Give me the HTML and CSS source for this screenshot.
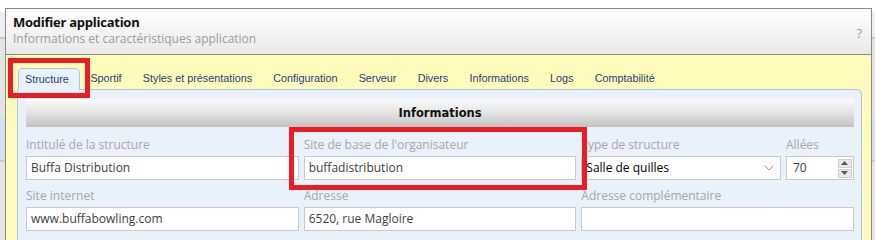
FILE: index.html
```html
<!DOCTYPE html>
<html lang="fr">
<head>
<meta charset="utf-8">
<title>Modifier application</title>
<link rel="stylesheet" href="styles.css">
</head>
<body>
<div class="page">
  <div class="dialog">
    <div class="dlg-head">
      <div class="dlg-titles">
        <div class="dlg-title">Modifier application</div>
        <div class="dlg-sub">Informations et caractéristiques application</div>
      </div>
      <div class="dlg-help">?</div>
    </div>
    <div class="dlg-body">
      <ul class="tabs">
        <li class="tab active">Structure</li>
        <li class="tab">Sportif</li>
        <li class="tab">Styles et présentations</li>
        <li class="tab">Configuration</li>
        <li class="tab">Serveur</li>
        <li class="tab">Divers</li>
        <li class="tab">Informations</li>
        <li class="tab">Logs</li>
        <li class="tab">Comptabilité</li>
      </ul>
      <div class="panel">
        <div class="section-head">Informations</div>
        <div class="fields">
          <div class="field">
            <div class="label">Intitulé de la structure</div>
            <div class="input">Buffa Distribution</div>
          </div>
          <div class="field">
            <div class="label">Site de base de l'organisateur</div>
            <div class="input">buffadistribution</div>
          </div>
          <div class="field split">
            <div class="field grow">
              <div class="label">Type de structure</div>
              <div class="input select"><span class="sel-text">Salle de quilles</span><svg class="chev" width="10" height="6" viewBox="0 0 10 6"><path d="M0.5 0.5 L5 5 L9.5 0.5" fill="none" stroke="#9a9a9a" stroke-width="1"/></svg></div>
            </div>
            <div class="field allees">
              <div class="label">Allées</div>
              <div class="input number"><span>70</span><span class="spin"><span class="spin-btn"><svg width="7" height="4" viewBox="0 0 7 4"><path d="M0 4 L3.5 0 L7 4Z" fill="#555"/></svg></span><span class="spin-btn"><svg width="7" height="4" viewBox="0 0 7 4"><path d="M0 0 L3.5 4 L7 0Z" fill="#555"/></svg></span></span></div>
            </div>
          </div>
          <div class="field">
            <div class="label">Site internet</div>
            <div class="input">www.buffabowling.com</div>
          </div>
          <div class="field">
            <div class="label">Adresse</div>
            <div class="input">6520, rue Magloire</div>
          </div>
          <div class="field">
            <div class="label">Adresse complémentaire</div>
            <div class="input"></div>
          </div>
        </div>
      </div>
    </div>
  </div>
  <div class="mark mark-tab"></div>
  <div class="mark mark-field"></div>
</div>
</body>
</html>
```

FILE: styles.css
```css
* { box-sizing: border-box; }
html, body { margin: 0; padding: 0; }
body {
  width: 875px;
  height: 240px;
  overflow: hidden;
  font-family: "Open Sans", "Noto Sans", sans-serif;
  background:
    linear-gradient(to bottom, #ffffff 0, #ffffff 12px, #efefef 12px, #efefef 37px, #b9c9dd 37px, #b9c9dd 39px, #e4e4e4 39px, #e4e4e4 118px, #d3e0ef 118px, #d3e0ef 160px, #cccccc 160px, #cccccc 162px, #e6e6e6 162px);
}
.page {
  position: relative;
  padding: 8px 0 0 5px;
}
.dialog {
  width: 867px;
  height: 240px;
  border: 1px solid #8a8a8a;
  border-bottom: none;
  background: #fffbbb;
}
.dlg-head {
  height: 46px;
  display: flex;
  justify-content: space-between;
  padding: 5px 9px 0 7px;
  background: linear-gradient(to bottom, #ffffff 0%, #f4f4f4 50%, #e9e9e9 100%);
  border-bottom: 1px solid #8a8a8a;
}
.dlg-title {
  font-weight: 700;
  font-size: 13px;
  line-height: 16px;
  letter-spacing: -0.25px;
  color: #111;
}
.dlg-sub {
  font-size: 12px;
  line-height: 18px;
  color: #9b9b9b;
}
.dlg-help {
  margin-top: 11px;
  font-size: 13px;
  line-height: 16px;
  color: #9a9aa8;
}
.dlg-body {
  padding: 0 9px 0 11px;
}
.tabs {
  list-style: none;
  margin: 0;
  padding: 13px 0 0 1px;
  display: flex;
  font-family: "Liberation Sans", Arial, sans-serif;
  font-size: 10.8px;
  color: #1f3d7e;
}
.tab {
  height: 22px;
  line-height: 21px;
  padding: 0 10.6px;
  margin-bottom: -1px;
}
.tab.active {
  background: #e9f1fb;
  border: 1px solid #a6c5ea;
  border-bottom: none;
  border-radius: 5px 5px 0 0;
  padding: 0 10px 0 6px;
  line-height: 20px;
  position: relative;
  z-index: 1;
}
.panel {
  border: 1px solid #a6c5ea;
  border-radius: 0 5px 0 0;
  background: #e9f1fb;
  padding: 9px 7px 20px 8px;
  height: 200px;
}
.section-head {
  height: 28px;
  line-height: 28px;
  text-align: center;
  font-family: "DejaVu Sans", Verdana, sans-serif;
  font-weight: 700;
  font-size: 11.5px;
  color: #111;
  background: linear-gradient(to bottom, #fbfbfb 0%, #e6e6e6 45%, #c2c2c2 100%);
}
.fields {
  display: grid;
  grid-template-columns: repeat(3, 1fr);
  column-gap: 5px;
  row-gap: 8px;
  padding-top: 10px;
}
.field { display: flex; flex-direction: column; min-width: 0; }
.field.split { flex-direction: row; gap: 5px; }
.field.grow { flex: 1; }
.field.allees { width: 68px; }
.label {
  font-size: 12px;
  line-height: 16px;
  height: 19px;
  color: #a7a7a7;
  white-space: nowrap;
}
.input {
  height: 24px;
  border: 1px solid #c9c9c9;
  background: #fff;
  font-size: 12px;
  line-height: 22px;
  padding: 0 4px;
  color: #3e3e3e;
  white-space: nowrap;
  overflow: hidden;
}
.input.select {
  display: flex;
  align-items: center;
  justify-content: space-between;
  padding: 0 6px 0 4px;
  color: #000;
}
.sel-text { line-height: 22px; }
.chev { display: block; }
.input.number {
  display: flex;
  justify-content: space-between;
  align-items: center;
  padding: 0 1px 0 6px;
  color: #3e3e3e;
}
.spin {
  display: flex;
  flex-direction: column;
  gap: 1px;
}
.spin-btn {
  width: 14px;
  height: 9px;
  background: #e8e8e8;
  border: 1px solid #cfcfcf;
  display: flex;
  align-items: center;
  justify-content: center;
}
.spin-btn svg { display: block; }
.mark {
  position: absolute;
  border: 5px solid #ec1c24;
}
.mark-tab { left: 8px; top: 58px; width: 82px; height: 40px; }
.mark-field { left: 289px; top: 127px; width: 298px; height: 63px; }
```
